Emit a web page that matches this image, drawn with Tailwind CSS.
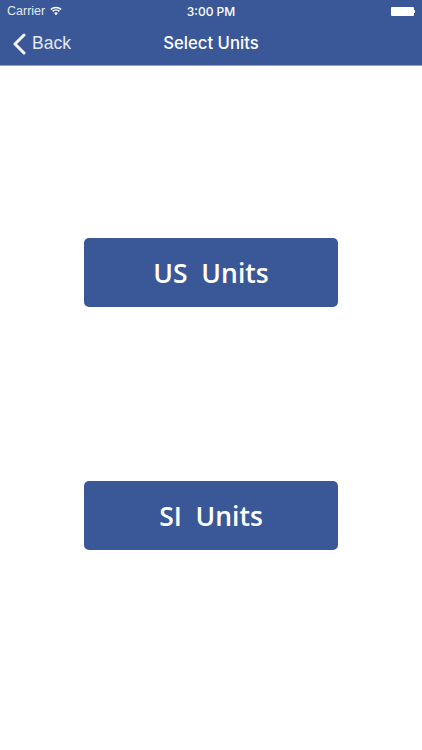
<!DOCTYPE html>
<html>
<head>
<meta charset="utf-8">
<script src="https://cdn.jsdelivr.net/npm/@tailwindcss/browser@4"></script>
</head>
<body class="w-[422px] h-[750px] bg-white overflow-hidden font-['Liberation_Sans',sans-serif]">
<header class="h-[66px] bg-[#3a5897] text-white flex flex-col border-b border-[#8fa3c9]">
  <div class="h-[22px] grid grid-cols-3 items-center px-[7px] text-[12.5px] pt-px">
    <div class="flex items-center gap-[5px]">
      <span class="text-[#e4e9f2]">Carrier</span>
      <svg width="12" height="10" viewBox="0 0 13 10" class="mb-[2px]" fill="none" stroke="white" stroke-width="1.6">
        <path d="M0.8 3.4C4 0.4 9 0.4 12.2 3.4"/>
        <path d="M2.8 5.4C4.9 3.5 8.1 3.5 10.2 5.4"/>
        <path d="M6.5 9.6L4.4 7.2C5.7 6.2 7.3 6.2 8.6 7.2Z" fill="white" stroke="none"/>
      </svg>
    </div>
    <div class="text-center font-medium text-[12px] font-['Inter',sans-serif]">3:00 PM</div>
    <div class="flex justify-end">
      <div class="flex items-center">
        <div class="w-[23px] h-[9px] bg-white rounded-[1px]"></div>
        <div class="w-px h-[3px] bg-white"></div>
      </div>
    </div>
  </div>
  <div class="h-[43px] relative flex items-center justify-center">
    <div class="absolute left-[13px] top-0 h-full flex items-center gap-[6px]">
      <svg width="13" height="22" viewBox="0 0 13 22" fill="none" stroke="white" stroke-width="3" stroke-linecap="round" stroke-linejoin="round" class="opacity-95">
        <path d="M11 2L2 11L11 20"/>
      </svg>
      <span class="text-[17.5px] text-[#e4e9f2]">Back</span>
    </div>
    <div class="text-[16.7px] font-medium font-['Inter',sans-serif]">Select Units</div>
  </div>
</header>
<main class="flex flex-col items-center pt-[172px] gap-[174px]">
  <button class="w-[254px] h-[69px] pt-[3px] rounded-[5px] bg-[#3a5897] text-white text-[26.5px] font-semibold font-['Open_Sans',sans-serif] whitespace-pre">US  Units</button>
  <button class="w-[254px] h-[69px] pt-[3px] rounded-[5px] bg-[#3a5897] text-white text-[26.5px] font-semibold font-['Open_Sans',sans-serif] whitespace-pre">SI  Units</button>
</main>
</body>
</html>
